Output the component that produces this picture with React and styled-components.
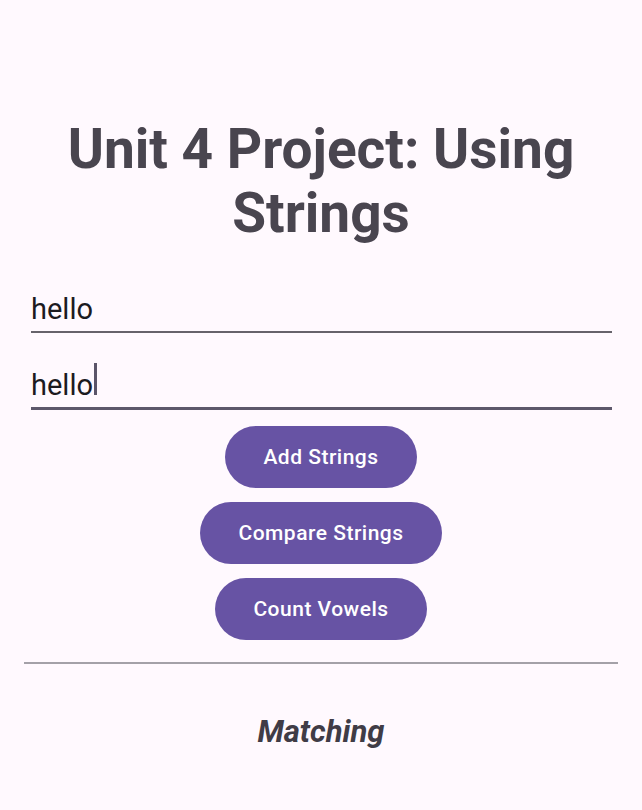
import React from "react";
import styled, { createGlobalStyle } from "styled-components";

const GlobalStyle = createGlobalStyle`
    html, body {
        margin: 0;
        padding: 0;
        background-color: #fff9fe;
    }

    body {
        font-family: "Roboto", "Liberation Sans", sans-serif;
    }
`;

const StyledScreen = styled.div`
    width: 642px;
    height: 810px;
    display: flex;
    flex-direction: column;
    background-color: #fff9fe;
    overflow: hidden;
`;

const StyledTitle = styled.h1`
    margin: 117px 24px 0;
    font-size: 55px;
    line-height: 64px;
    font-weight: 700;
    color: #49454f;
    text-align: center;
`;

const StyledForm = styled.div`
    display: flex;
    flex-direction: column;
    padding: 0 30px 0 31px;
`;

const StyledField = styled.div`
    margin-top: ${(props) => (props.focused ? "30px" : "46px")};
    padding-bottom: 4px;
    border-bottom: ${(props) =>
        props.focused ? "3px solid #5d586b" : "2px solid #67636b"};
    font-size: 29px;
    line-height: 36px;
    color: #1c1b1f;
    white-space: nowrap;
`;

const StyledCaret = styled.span`
    display: inline-block;
    width: 3px;
    height: 32px;
    margin-left: 1px;
    background-color: #5b5569;
`;

const StyledButtons = styled.div`
    display: flex;
    flex-direction: column;
    align-items: center;
    gap: 14px;
    margin-top: 16px;
`;

const StyledButton = styled.button`
    height: 62px;
    padding: 0 38px;
    border: none;
    border-radius: 31px;
    background-color: #6753a4;
    color: #ffffff;
    font-family: "Roboto", "Liberation Sans", sans-serif;
    font-size: 21px;
    font-weight: 500;
    letter-spacing: 0.5px;

    &:hover {
        cursor: pointer;
    }
`;

const StyledDivider = styled.hr`
    margin: 22px 24px 0;
    border: none;
    height: 2px;
    background-color: #a4a1a8;
`;

const StyledResult = styled.p`
    margin: 50px 0 0;
    font-size: 31px;
    line-height: 36px;
    font-weight: 700;
    font-style: italic;
    color: #403c46;
    text-align: center;
`;

const buttons = ["Add Strings", "Compare Strings", "Count Vowels"];

const App = () => {
    return (
        <StyledScreen>
            <GlobalStyle />
            <StyledTitle>Unit 4 Project: Using Strings</StyledTitle>
            <StyledForm>
                <StyledField>hello</StyledField>
                <StyledField focused>
                    hello
                    <StyledCaret />
                </StyledField>
            </StyledForm>
            <StyledButtons>
                {buttons.map((label) => (
                    <StyledButton key={label}>{label}</StyledButton>
                ))}
            </StyledButtons>
            <StyledDivider />
            <StyledResult>Matching</StyledResult>
        </StyledScreen>
    );
};

export default App;
